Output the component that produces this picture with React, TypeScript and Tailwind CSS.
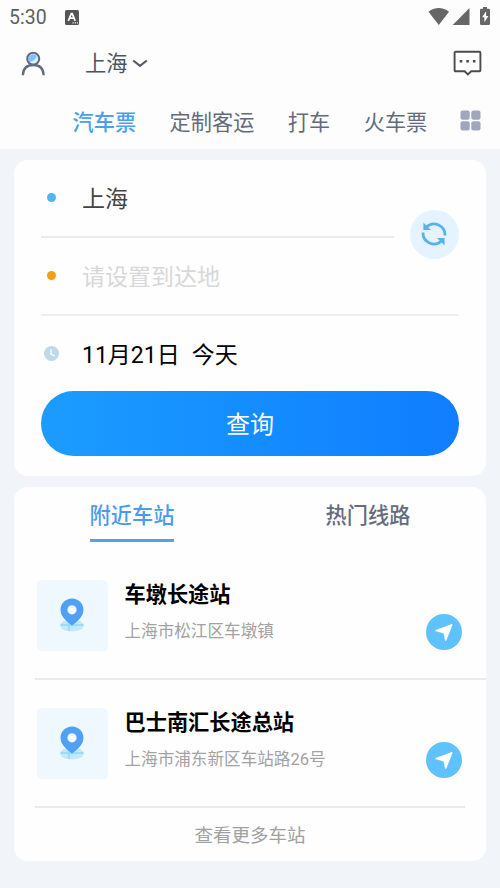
import type { ReactNode } from "react";

type Station = {
    id: number;
    name: string;
    address: string;
}

const categories = ["汽车票", "定制客运", "打车", "火车票"];

const stations: Station[] = [
    { id: 1, name: "车墩长途站", address: "上海市松江区车墩镇" },
    { id: 2, name: "巴士南汇长途总站", address: "上海市浦东新区车站路26号" },
];

const StatusBar = () => {
    return (
        <div className="flex h-[34px] items-center justify-between px-[9px] text-[#5f5f5f]">
            <div className="flex items-center gap-[18px]">
                <span className="pt-[2px] text-[19.5px] leading-[32px]">5:30</span>
                <svg width="14" height="15" viewBox="0 0 14 15">
                    <rect width="14" height="15" rx="1.5" fill="#555" />
                    <path d="M3.3 10.8 6.3 3.6h.9l3 7.2M4.6 8.2h4.2" fill="none" stroke="#fff" strokeWidth="1.7" />
                    <path d="M7.5 12.8h1.2M9.8 12.8H11M12 12.8h1" stroke="#fff" strokeWidth="1.2" />
                </svg>
            </div>
            <svg className="-mt-[2px]" width="63" height="19" viewBox="0 0 63 19" fill="#666">
                <path d="M.5 4.7C6.5-.1 15-.1 21 4.7L10.8 18Z" />
                <path d="M41.5 1V18H24.7Z" />
                <path fillRule="evenodd" d="M55 0h4v1.700h1.700q1.300 0 1.300 1.300v13.700q0 1.300-1.300 1.300h-7.400q-1.300 0-1.300-1.300V3q0-1.300 1.300-1.300h1.700ZM58.100 4.300l-4 6h2.300v5l4-6.300h-2.300Z" />
            </svg>
        </div>
    );
}

const Header = () => {
    return (
        <header className="h-[149px] bg-[#fdfdfe]">
            <StatusBar />
            <div className="flex h-[58px] items-center pl-[21px] pr-[18px]">
                <svg width="25" height="25" viewBox="0 0 25 25" fill="none">
                    <circle cx="12.2" cy="7.8" r="6" fill="#d9edfd" stroke="#626a7d" strokeWidth="2.1" />
                    <path d="M7.5 9.2A4.900 4.900 0 0 1 12 3.200Q17.200 3.500 15 7T8.300 11Z" fill="#82c1f8" />
                    <path d="M1.8 24.2C2.200 17.300 6.500 14 12.300 14S22.300 17.300 22.700 24.200" stroke="#626a7d" strokeWidth="2.3" />
                </svg>
                <span className="ml-[39px] pt-[2px] text-[21.2px] text-[#4e5361]">上海</span>
                <svg className="ml-[5px]" width="16" height="9" viewBox="0 0 16 9" fill="none">
                    <path d="M1.2 1.5 8 6.8 14.8 1.5" stroke="#555b69" strokeWidth="2.2" />
                </svg>
                <svg className="ml-auto" width="29" height="26" viewBox="0 0 29 26" fill="none" stroke="#4b4b4b">
                    <path d="M2.6 1.800H26.400q1 0 1 1V20.300q0 1-1 1H18.200L14.900 24.400 11.600 21.300H2.600q-1 0-1-1V2.800q0-1 1-1Z" strokeWidth="1.9" />
                    <path d="M6.7 11.3h2.600M13.300 11.300h2.600M19.900 11.300h2.600" strokeWidth="2.6" />
                </svg>
            </div>
            <nav className="flex h-[57px] items-center pl-[72.5px] pr-[19px] pt-[3px] text-[21.2px] text-[#646b7b]">
                <div className="flex gap-[33.5px] pt-[2px]">
                    {categories.map((category, index) => (
                        <span key={category} className={index === 0 ? "font-medium text-[#4c9fee]" : ""}>{category}</span>
                    ))}
                </div>
                <svg className="mb-[3px] ml-auto" width="21" height="21" viewBox="0 0 21 21" fill="#a0a7bd">
                    <rect x=".5" y=".5" width="9.2" height="9.2" rx="2" />
                    <rect x="11.3" y=".5" width="9.2" height="9.2" rx="2" />
                    <rect x=".5" y="11.3" width="9.2" height="9.2" rx="2" />
                    <rect x="11.3" y="11.3" width="9.2" height="9.2" rx="2" />
                </svg>
            </nav>
        </header>
    );
}

const FieldRow = ({ icon, children }: { icon: ReactNode; children: ReactNode }) => {
    return (
        <div className="flex h-[76px] items-center">
            <div className="flex w-[21px] justify-center pb-px">{icon}</div>
            <div className="ml-[20px] pt-[5px] text-[23px]">{children}</div>
        </div>
    );
}

const SearchCard = () => {
    return (
        <section className="mx-[14px] mt-[11px] h-[316px] rounded-[14px] bg-[#fefefe] px-[27px]">
            <div className="flex h-[78px] items-start">
                <div className="h-[78px] w-[353px] border-b-2 border-[#ececec]">
                    <FieldRow icon={<span className="size-[9px] rounded-full bg-[#50b4f5]" />}>
                        <span className="text-[#444]">上海</span>
                    </FieldRow>
                </div>
                <button className="ml-4 mt-[50px] flex size-[49px] items-center justify-center rounded-full bg-[#e5f3fe] pb-px pr-px">
                    <svg width="26" height="26" viewBox="0 0 26 26" fill="none" stroke="#56b3ec" strokeWidth="2.8">
                        <path d="M5.5 6A11 11 0 0 1 24 14.5M20.5 20A11 11 0 0 1 2 11.5" />
                        <path d="M2.4 1.4V9H10ZM23.600 24.600V17H16Z" fill="#56b3ec" stroke="none" />
                    </svg>
                </button>
            </div>
            <div className="h-[78px] border-b-2 border-[#eee]">
                <FieldRow icon={<span className="size-[9px] rounded-full bg-[#f59e14]" />}>
                    <span className="text-[#d8d8d8]">请设置到达地</span>
                </FieldRow>
            </div>
            <FieldRow
                icon={
                    <svg width="15" height="15" viewBox="0 0 15 15">
                        <circle cx="7.5" cy="7.5" r="7.5" fill="#bfd9ea" />
                        <path d="M7 3.2V8l3.7 2" fill="none" stroke="#fff" strokeWidth="1.3" />
                    </svg>
                }
            >
                <span className="text-black">11月21日</span>
                <span className="ml-3 text-black">今天</span>
            </FieldRow>
            <button className="-mt-px h-[65px] w-full rounded-full bg-linear-to-r from-[#1c9cff] to-[#117dff] pt-[2px] text-[24px] text-white">
                查询
            </button>
        </section>
    );
}

const StationRow = ({ station }: { station: Station }) => {
    return (
        <div className="flex h-[126px] pt-[28px]">
            <div className="ml-[2px] flex size-[71px] items-center justify-center rounded-[5px] bg-[#f0f8ff] pr-[2px] pb-px">
                <svg width="24" height="34" viewBox="0 0 24 34">
                    <ellipse cx="12" cy="27.5" rx="11.8" ry="6" fill="#bfe8fb" />
                    <path d="M.5 27h23M9 23v10" stroke="#93d7f5" strokeWidth="1.5" />
                    <path d="M12 .5C5.5.5.5 5.5.5 11.8.5 19 7 23.5 12 27.7 17 23.5 23.5 19 23.5 11.8 23.5 5.5 18.5.5 12 .5Z" fill="#50a0f5" />
                    <circle cx="12" cy="11.8" r="4.6" fill="#f6fbff" />
                </svg>
            </div>
            <div className="ml-[16.5px]">
                <h2 className="text-[21.2px] font-bold leading-[30px] text-black">{station.name}</h2>
                <p className="mt-[10px] text-[16.6px] leading-6 text-[#a2a2a2]">{station.address}</p>
            </div>
            <button className="ml-auto mr-[3px] mt-[34px] flex size-9 items-center justify-center rounded-full bg-[#60c2fc] pr-px">
                <svg width="20" height="20" viewBox="0 0 20 20">
                    <path d="M18.4 3.2 12.4 18.300Q11.500 19.800 11 18.200L9.800 12.400Q9.500 11.300 8.400 10.900L1.900 9.300Q.5 8.600 1.700 8L17.200 2.200Q18.900 1.700 18.400 3.200Z" fill="#fff" />
                </svg>
            </button>
        </div>
    );
}

const StationsCard = () => {
    return (
        <section className="mx-[14px] mt-[11px] h-[374px] rounded-[14px] bg-[#fefefe]">
            <div className="flex h-[65px] text-[21.2px] font-medium">
                <div className="flex flex-1 justify-center">
                    <span className="h-[55px] border-b-[3px] border-[#5a9fe3] leading-[58px] text-[#489bed]">附近车站</span>
                </div>
                <div className="flex-1 text-center leading-[58px] text-[#666c79]">热门线路</div>
            </div>
            {stations.map((station, index) => (
                <div key={station.id} className={index === 0 ? "ml-[21px] border-b-2 border-[#eaeaea] pr-[21px]" : "mx-[21px] border-b-2 border-[#eaeaea]"}>
                    <StationRow station={station} />
                </div>
            ))}
            <div className="text-center text-[18.5px] leading-[56px] text-[#a0a0a0]">查看更多车站</div>
        </section>
    );
}

export default function App() {
    return (
        <main className="h-[888px] w-[500px] overflow-hidden bg-[#f1f5fa] font-[Roboto,'Noto_Sans_CJK_SC',sans-serif]">
            <Header />
            <SearchCard />
            <StationsCard />
        </main>
    );
}
